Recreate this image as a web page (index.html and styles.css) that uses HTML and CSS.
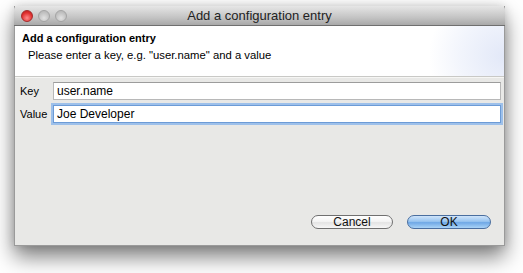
FILE: index.html
```html
<!DOCTYPE html>
<html lang="en">
<head>
    <meta charset="UTF-8">
    <title>Add a configuration entry</title>
    <link rel="stylesheet" href="styles.css">
</head>
<body>

<div class="window">
    <div class="titlebar">
        <div class="lights">
            <span class="light close"></span>
            <span class="light"></span>
            <span class="light"></span>
        </div>
        <div class="title">Add a configuration entry</div>
    </div>
    <div class="header">
        <div class="header-title">Add a configuration entry</div>
        <div class="header-msg">Please enter a key, e.g. "user.name" and a value</div>
    </div>
    <div class="content">
        <div class="form">
            <label class="lbl">Key</label>
            <div class="field">user.name</div>
            <label class="lbl">Value</label>
            <div class="field focused">Joe Developer</div>
        </div>
        <div class="buttons">
            <button class="btn">Cancel</button>
            <button class="btn btn-default">OK</button>
        </div>
    </div>
</div>

</body>
</html>
```

FILE: styles.css
```css
body{
    margin:0;
    min-height:273px;
    padding-top:6px;
    box-sizing: border-box;
    background:#fff;
    font-family: 'Liberation Sans', Arial, sans-serif;
    font-size:11px;
    color:#000;
}
.window{
    margin-left:14px;
    width:491px;
    height:240px;
    box-sizing: border-box;
    display:flex;
    flex-direction: column;
    background:#e8e8e6;
    border:1px solid #9a9a9a;
    border-top:0;
    box-shadow: 0 11px 20px rgba(0,0,0,.5), 0 0 9px rgba(0,0,0,.15);
}
.titlebar{
    height:19px;
    position:relative;
    background: linear-gradient(#e6e6e6, #c4c4c4 60%, #a9a9a9);
    border-bottom:1px solid #6f6f6f;
    margin:0 -1px;
    border-radius:4px 4px 0 0;
}
.lights{
    position:absolute;
    left:7px;
    top:4px;
    display:flex;
    gap:5px;
}
.light{
    width:12px;
    height:12px;
    border-radius:50%;
    box-sizing: border-box;
    border:1px solid #a4a4a4;
    background: radial-gradient(circle at 50% 70%, #e2e2e2, #bdbdbd 70%);
}
.light.close{
    border-color:#a52b2b;
    background: radial-gradient(circle at 50% 70%, #ff8a8a, #e0302f 60%, #b81c1c);
}
.title{
    text-align:center;
    font-size:13px;
    line-height:19px;
    color:#222;
}
.header{
    height:51px;
    box-sizing: border-box;
    padding:6px 0 0 7px;
    background:
        radial-gradient(ellipse 75px 70px at 100% 60%, #e2e8f8 0%, rgba(232,237,250,.55) 60%, rgba(255,255,255,0) 100%),
        #fff;
    border-bottom:1px solid #c9c9c6;
    box-shadow: 0 1px 0 #f6f6f4;
}
.header-title{
    font-weight:700;
    line-height:13px;
}
.header-msg{
    margin-top:4px;
    padding-left:6px;
    line-height:13px;
    font-size:11.3px;
}
.content{
    flex:1;
    display:flex;
    flex-direction: column;
    justify-content: space-between;
    padding:5px 3px 16px 5px;
}
.form{
    display:grid;
    grid-template-columns: 33px 1fr;
    row-gap:4px;
    align-items:center;
}
.lbl{
    line-height:18px;
}
.field{
    height:18px;
    line-height:17px;
    box-sizing: border-box;
    padding-left:3px;
    background:#fff;
    border:1px solid #b8b8b8;
    border-top-color:#9c9c9c;
    font-size:12px;
}
.field.focused{
    border-color:#6c9bd6;
    box-shadow: 0 0 0 2px #9dc0ea;
    margin:1px 0;
}
.buttons{
    display:flex;
    justify-content: flex-end;
    gap:14px;
    padding-right:10px;
}
.btn{
    width:82px;
    height:14px;
    padding:0;
    box-sizing: border-box;
    border-radius:7px;
    border:1px solid #707070;
    background: linear-gradient(#ffffff, #f4f4f4 45%, #e4e4e4 55%, #f7f7f7);
    font-family: 'Liberation Sans', Arial, sans-serif;
    font-size:12px;
    line-height:12px;
    color:#111;
}
.btn-default{
    width:84px;
    border-color:#4a6e9f;
    background: linear-gradient(#cfe4fa, #98c4f0 45%, #6fa8e6 55%, #a9d3f7);
}
```
